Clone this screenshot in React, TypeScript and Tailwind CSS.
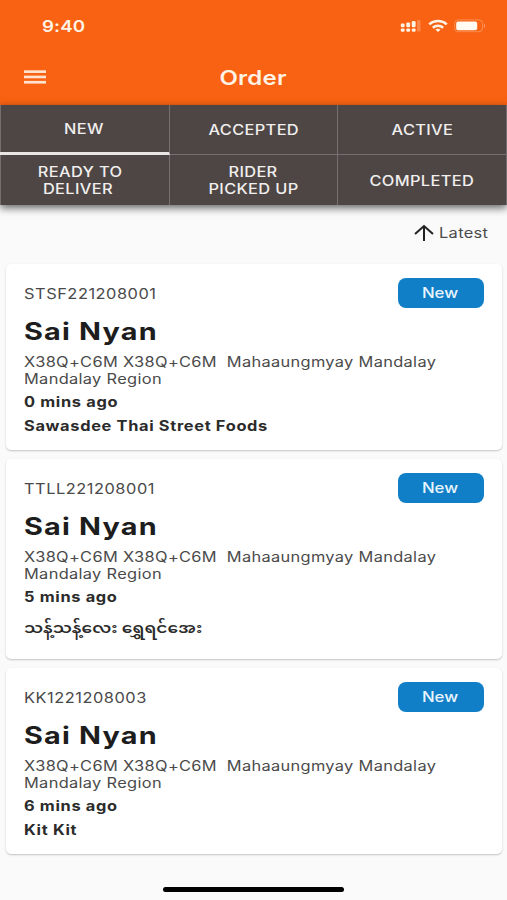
import React from 'react';
import clsx from 'clsx';

type Order = {
  id: string;
  customer: string;
  age: string;
  shop: string;
  burmese?: boolean;
};

const orders: Order[] = [
  { id: 'STSF221208001', customer: 'Sai Nyan', age: '0 mins ago', shop: 'Sawasdee Thai Street Foods' },
  { id: 'TTLL221208001', customer: 'Sai Nyan', age: '5 mins ago', shop: 'သန့်သန့်လေး ရွှေရင်အေး', burmese: true },
  { id: 'KK1221208003', customer: 'Sai Nyan', age: '6 mins ago', shop: 'Kit Kit' },
];

const tabs = [
  ['NEW'],
  ['ACCEPTED'],
  ['ACTIVE'],
  ['READY TO', 'DELIVER'],
  ['RIDER', 'PICKED UP'],
  ['COMPLETED'],
];

const StatusBar = () => (
  <div className="flex h-[50px] items-center justify-between pl-[42px] pr-[21px] pt-[2px] text-[#fff3e6]">
    <span className="w-max origin-left scale-x-[1.17] text-[16px] font-semibold leading-none tracking-[0.1px]">9:40</span>
    <div className="flex items-center">
      <svg width="21" height="14" viewBox="0 0 21 14" fill="#fff3e6">
        <rect x="0.8" y="4.6" width="3.8" height="3.6" rx="1.2" />
        <rect x="6.3" y="3.4" width="3.8" height="4.8" rx="1.2" />
        <rect x="11.8" y="2" width="3.8" height="6.2" rx="1.2" />
        <rect x="0.8" y="9.4" width="3.8" height="3.4" rx="1.2" />
        <rect x="6.3" y="9.4" width="3.8" height="3.4" rx="1.2" />
        <rect x="11.8" y="9.4" width="3.8" height="3.4" rx="1.2" />
        <rect x="17" y="1" width="3.6" height="11.5" rx="1" opacity="0.25" />
      </svg>
      <svg className="ml-[7px]" width="20" height="14" viewBox="0 0 20 14" fill="none" stroke="#fff3e6" strokeWidth="2.5">
        <path d="M1.2 5.4C6 1 14 1 18.8 5.4" />
        <path d="M4.8 8.8C7.7 6.2 12.3 6.2 15.2 8.8" />
        <path d="M10 13L7.4 10.6C8.8 9.4 11.2 9.4 12.6 10.6Z" fill="#fff3e6" stroke="none" />
      </svg>
      <svg className="ml-[6px]" width="32" height="14" viewBox="0 0 32 14">
        <rect x="0.6" y="0.9" width="28" height="11.8" rx="3.6" fill="none" stroke="#fff3e6" strokeOpacity="0.3" />
        <rect x="2.2" y="2.6" width="21" height="8.6" rx="2" fill="#fffaf2" />
        <path d="M30 4.8c1.4.4 1.4 3.8 0 4.2z" fill="#fff3e6" opacity="0.4" />
      </svg>
    </div>
  </div>
);

const Header = () => (
  <header className="h-[105px] bg-[#f86212]">
    <StatusBar />
    <div className="grid h-[54px] grid-cols-[1fr_auto_1fr] items-center px-6">
      <button aria-label="Menu">
        <svg width="22" height="14" viewBox="0 0 22 14" fill="#ffe3cf">
          <rect y="0.3" width="22" height="2.7" />
          <rect y="5.6" width="22" height="2.7" />
          <rect y="10.9" width="22" height="2.7" />
        </svg>
      </button>
      <h1 className="scale-x-[1.2] pt-px text-[20px] font-semibold leading-none tracking-[0.2px] text-[#fff3e6]">Order</h1>
    </div>
  </header>
);

const Tabs = () => (
  <nav className="grid h-[100px] grid-cols-3 grid-rows-[50px_50px] border-l border-[#757070] bg-[#4d4645] shadow-[0_3px_8px_rgba(0,0,0,0.6)]">
    {tabs.map((lines, i) => (
      <button
        key={lines[0]}
        className={clsx(
          'flex flex-col items-center justify-center border-r border-[#757070] text-[14px] font-medium leading-[17px] text-[#f1efee]',
          i === 0 && '-ml-px border-b-[3px] border-b-[#e8e6e5]',
          (i === 1 || i === 2) && 'border-b',
          i === 3 && 'pr-[9px]',
        )}
      >
        {lines.map((line) => (
          <span key={line} className={clsx('scale-x-[1.17] tracking-[0.3px]', line === 'DELIVER' && 'mr-[4px]')}>{line}</span>
        ))}
      </button>
    ))}
  </nav>
);

const OrderCard = ({ order }: { order: Order }) => (
  <article
    className={clsx(
      'rounded-[5px] bg-white pl-[18px] pr-[18px] pt-[14px] shadow-[0_1px_2px_rgba(0,0,0,0.22)]',
      order.burmese ? 'h-[200px]' : 'h-[186px]',
    )}
  >
    <div className="flex h-[30px] items-center justify-between">
      <span className="origin-left scale-x-[1.17] pt-px text-[14px] leading-none tracking-[0.45px] text-[#4a4a4a]">{order.id}</span>
      <span className="flex h-[30px] w-[86px] items-center justify-center rounded-[8px] bg-[#117fc8] text-[14px] font-medium text-[#e9f5fd]">
        <span className="scale-x-[1.2] pb-px pr-px">New</span>
      </span>
    </div>
    <h2 className="mt-[8px] w-max origin-left scale-x-[1.2] text-[24px] font-bold leading-[32px] tracking-[1px] text-[#1d1d1d]">{order.customer}</h2>
    <p className="mt-[5px] w-max origin-left scale-x-[1.17] whitespace-pre text-[14px] leading-[17px] tracking-[0.28px] text-[#4a4a4a]">
      {'X38Q+C6M X38Q+C6M  Mahaaungmyay Mandalay\nMandalay Region'}
    </p>
    <p className="mt-[6px] w-max origin-left scale-x-[1.17] text-[14px] font-bold leading-[18px] tracking-[0.57px] text-[#2b2b2b]">{order.age}</p>
    <p
      className={clsx(
        'w-max origin-left text-[14px] text-[#2b2b2b]',
        order.burmese ? 'mt-[9px] scale-x-[1.22] font-semibold leading-[26px]' : 'mt-[6px] scale-x-[1.17] font-bold leading-[18px] tracking-[0.57px]',
      )}
    >
      {order.shop}
    </p>
  </article>
);

const App = () => {
  return (
    <div className="flex h-[900px] w-[507px] flex-col overflow-hidden bg-[#fafafa] font-[Inter,'Noto_Sans_Myanmar','Noto_Sans',sans-serif]">
      <Header />
      <Tabs />
      <div className="flex h-[59px] items-center justify-end pb-[4px] pr-[18px] text-[#4a4a4a]">
        <svg className="mr-[5px]" width="20" height="18" viewBox="0 0 20 18" fill="none" stroke="#222" strokeWidth="2">
          <path d="M10 17V2M1 10L10 2L19 10" />
        </svg>
        <span className="w-[50px]">
          <span className="block w-max origin-left scale-x-[1.17] text-[14px] leading-none tracking-[0.3px]">Latest</span>
        </span>
      </div>
      <main className="flex flex-col gap-[9px] pl-[6px] pr-[5px]">
        {orders.map((order) => (
          <OrderCard key={order.id} order={order} />
        ))}
      </main>
      <div className="mx-auto mb-[8px] mt-auto h-[5px] w-[181px] rounded-full bg-black" />
    </div>
  );
};

export default App;
